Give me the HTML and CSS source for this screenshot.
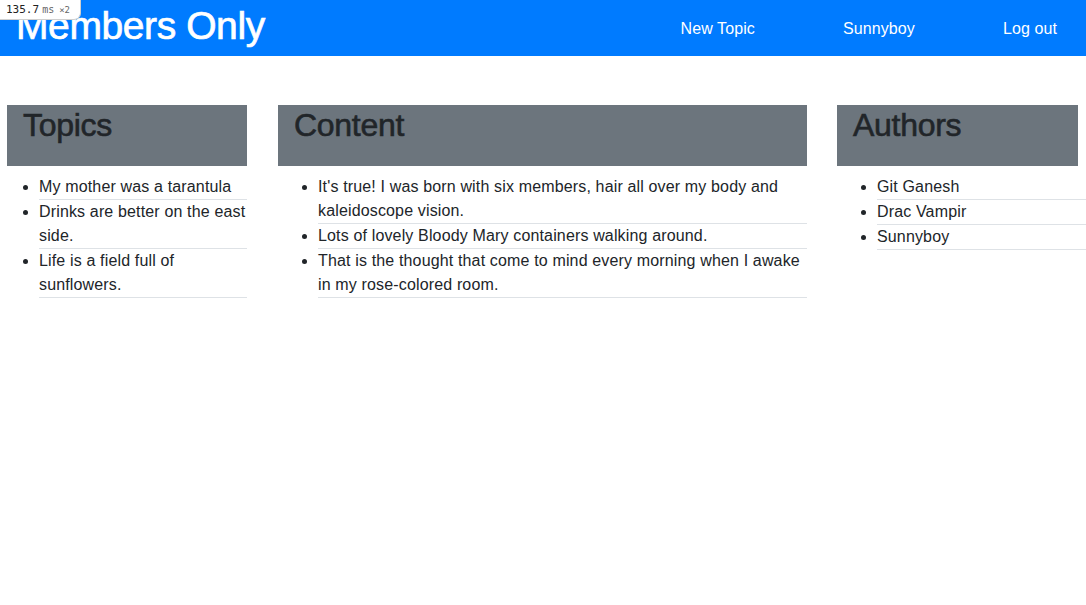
FILE: index.html
```html
<!DOCTYPE html>
<html lang="en">
<head>
<meta charset="utf-8">
<title>Members Only</title>
<link rel="stylesheet" href="styles.css">
</head>
<body>
<div class="timer">135.7<span class="unit">ms</span><span class="mult">×2</span></div>
<nav class="navbar">
  <h1 class="brand">Members Only</h1>
  <div class="links">
    <a href="#">New Topic</a>
    <a href="#">Sunnyboy</a>
    <a href="#">Log out</a>
  </div>
</nav>
<main class="columns">
  <section class="col col-topics">
    <h2 class="col-head">Topics</h2>
    <ul class="items">
      <li>My mother was a tarantula</li>
      <li>Drinks are better on the east side.</li>
      <li>Life is a field full of sunflowers.</li>
    </ul>
  </section>
  <section class="col col-content">
    <h2 class="col-head">Content</h2>
    <ul class="items">
      <li>It's true! I was born with six members, hair all over my body and kaleidoscope vision.</li>
      <li>Lots of lovely Bloody Mary containers walking around.</li>
      <li>That is the thought that come to mind every morning when I awake in my rose-colored room.</li>
    </ul>
  </section>
  <section class="col col-authors">
    <h2 class="col-head">Authors</h2>
    <ul class="items">
      <li>Git Ganesh</li>
      <li>Drac Vampir</li>
      <li>Sunnyboy</li>
    </ul>
  </section>
</main>
</body>
</html>
```

FILE: styles.css
```css
* { box-sizing: border-box; }
html, body { margin: 0; padding: 0; }
body {
  font-family: "Liberation Sans", Arial, sans-serif;
  font-size: 16px;
  line-height: 24px;
  color: #212529;
  background: #fff;
}
.timer {
  position: absolute;
  top: 0;
  left: 0;
  width: 81px;
  height: 20px;
  padding-left: 6px;
  background: #fff;
  border: 1px solid #d0d0d0;
  border-width: 0 1px 1px 0;
  border-radius: 0 0 7px 0;
  font-family: "DejaVu Sans Mono", monospace;
  font-size: 11px;
  line-height: 19px;
  color: #222;
  z-index: 5;
  white-space: nowrap;
}
.timer .unit { color: #666; font-size: 10px; margin-left: 3px; }
.timer .mult { color: #666; font-size: 9px; margin-left: 5px; }
.navbar {
  height: 56px;
  background: #007bff;
  display: flex;
  align-items: center;
  justify-content: space-between;
  padding: 0 29px 0 16px;
}
.brand {
  margin: 0;
  font-size: 39px;
  font-weight: 400;
  line-height: 48px;
  color: #fff;
  letter-spacing: -0.4px;
  -webkit-text-stroke: 0.7px #fff;
  position: relative;
  top: -2px;
}
.links {
  display: flex;
  gap: 88px;
  position: relative;
  top: 1px;
}
.links a {
  color: #fff;
  text-decoration: none;
  font-size: 16px;
  letter-spacing: 0.1px;
}
.columns {
  display: grid;
  grid-template-columns: 241px 529px 241px;
  column-gap: 30px;
  padding: 49px 0 0 7px;
  align-items: start;
}
.col-head {
  margin: 0;
  height: 61px;
  background: #6c757d;
  font-size: 32px;
  font-weight: 400;
  line-height: 40px;
  padding: 0 0 0 16px;
  color: #212529;
  letter-spacing: -0.3px;
  -webkit-text-stroke: 0.6px #212529;
}
.col-topics .col-head { margin-right: 1px; }
.col-topics .items { padding-left: 32px; margin-right: 1px; }
.col-content .items { padding-left: 40px; }
.col-authors .items { padding-left: 40px; margin-right: -8px; }
.items {
  margin: 9px 0 0;
  list-style: disc;
  letter-spacing: 0.15px;
}
.items li {
  border-bottom: 1px solid #dee2e6;
}
```
